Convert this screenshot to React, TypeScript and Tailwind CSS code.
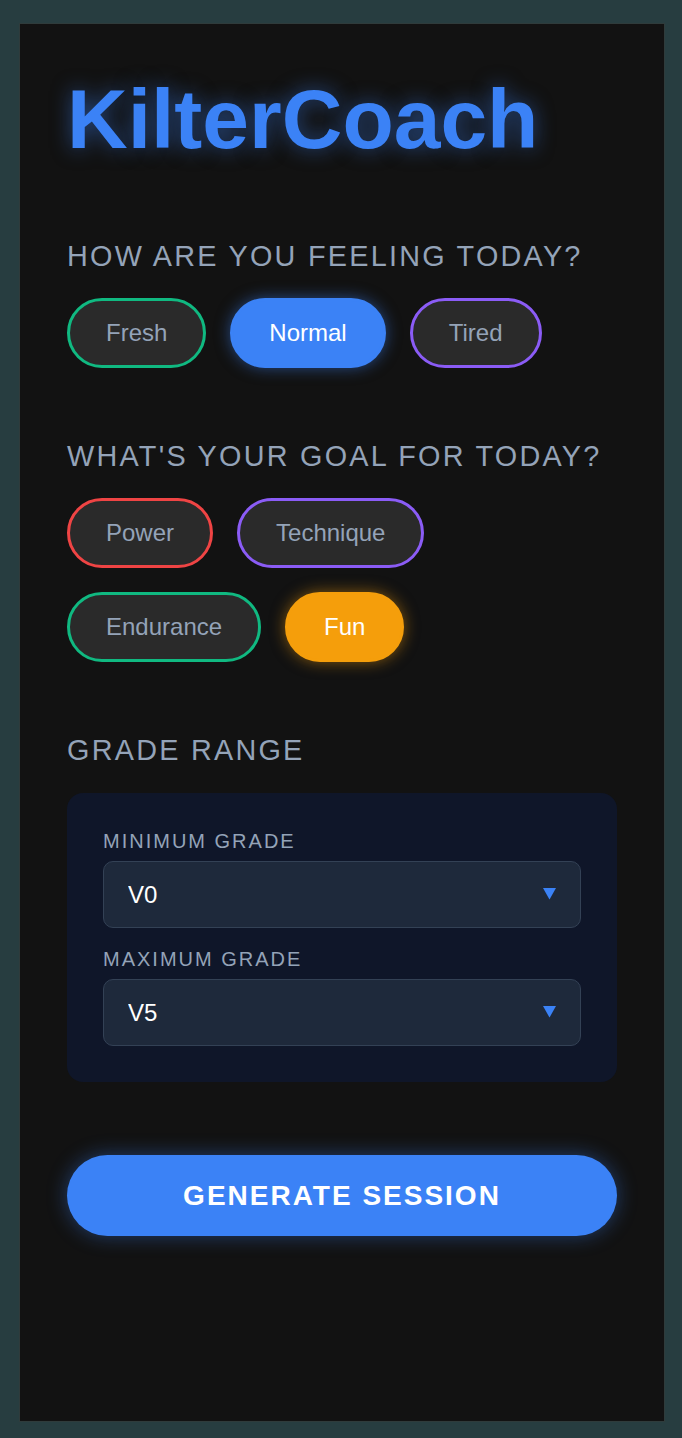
import { useState } from "react";

const MOODS = [
  { label: "Fresh", border: "border-[#10b981]" },
  { label: "Normal", border: "border-[#8b5cf6]" },
  { label: "Tired", border: "border-[#8b5cf6]" },
];

const GOALS = [
  { label: "Power", border: "border-[#ef4444]" },
  { label: "Technique", border: "border-[#8b5cf6]" },
  { label: "Endurance", border: "border-[#10b981]" },
  { label: "Fun", border: "border-[#f59e0b]" },
];

const GRADES = ["V0", "V1", "V2", "V3", "V4", "V5", "V6", "V7", "V8", "V9", "V10"];

const Pill = ({
  label,
  border,
  active,
  activeClass,
  onClick,
}: {
  label: string;
  border: string;
  active: boolean;
  activeClass: string;
  onClick: () => void;
}) => (
  <button
    onClick={onClick}
    className={`h-[70px] rounded-full border-[3px] px-[36px] text-[24px] leading-none ${
      active ? activeClass : `${border} bg-[#2a2a2a] text-[#94a3b8]`
    }`}
  >
    {label}
  </button>
);

const GradeSelect = ({
  label,
  value,
  onChange,
}: {
  label: string;
  value: string;
  onChange: (v: string) => void;
}) => (
  <div>
    <div className="text-[20px] leading-[24px] tracking-[2px] text-[#94a3b8]">{label}</div>
    <div className="relative mt-[8px]">
      <select
        value={value}
        onChange={(e) => onChange(e.target.value)}
        className="block h-[67px] w-full appearance-none rounded-[10px] border border-[#334155] bg-[#1e293b] px-[24px] text-[24px] leading-[normal] text-white outline-none"
      >
        {GRADES.map((g) => (
          <option key={g}>{g}</option>
        ))}
      </select>
      <svg
        className="pointer-events-none absolute right-[25px] top-[27px]"
        width="13"
        height="12"
        viewBox="0 0 13 12"
      >
        <polygon points="0,0 13,0 6.5,11.5" fill="#3b82f6" />
      </svg>
    </div>
  </div>
);

export default function App() {
  const [mood, setMood] = useState("Normal");
  const [goal, setGoal] = useState("Fun");
  const [min, setMin] = useState("V0");
  const [max, setMax] = useState("V5");

  return (
    <div className="min-h-[1438px] bg-[#273d40] pl-[19px] pt-[23px] font-['Liberation_Sans',Arial,sans-serif] leading-[normal]">
      <main className="h-[1399px] w-[646px] border border-[#2f3b3b] bg-[#121212] px-[47px] pt-[47px]">
        <h1 className="text-[84px] leading-[97px] font-bold text-[#3b82f6] [text-shadow:0_0_20px_rgba(59,130,246,0.5)]">
          KilterCoach
        </h1>

        <section className="mt-[72px]">
          <h2 className="mb-[25px] text-[28.8px] leading-[33px] tracking-[2.25px] text-[#94a3b8]">
            HOW ARE YOU FEELING TODAY?
          </h2>
          <div className="flex flex-wrap gap-[24px]">
            {MOODS.map((m) => (
              <Pill
                key={m.label}
                {...m}
                active={mood === m.label}
                activeClass="border-[#3b82f6] bg-[#3b82f6] text-white shadow-[0_0_15px_rgba(59,130,246,0.5)]"
                onClick={() => setMood(m.label)}
              />
            ))}
          </div>
        </section>

        <section className="mt-[72px]">
          <h2 className="mb-[25px] text-[28.8px] leading-[33px] tracking-[2.25px] text-[#94a3b8]">
            WHAT'S YOUR GOAL FOR TODAY?
          </h2>
          <div className="flex flex-wrap gap-[24px]">
            {GOALS.map((g) => (
              <Pill
                key={g.label}
                {...g}
                active={goal === g.label}
                activeClass="border-[#f59e0b] bg-[#f59e0b] text-white shadow-[0_0_15px_rgba(245,158,11,0.5)]"
                onClick={() => setGoal(g.label)}
              />
            ))}
          </div>
        </section>

        <section className="mt-[72px]">
          <h2 className="mb-[26px] text-[28.8px] leading-[33px] tracking-[2.25px] text-[#94a3b8]">
            GRADE RANGE
          </h2>
          <div className="flex flex-col gap-[19px] rounded-[16px] bg-[#0f1629] p-[36px]">
            <GradeSelect label="MINIMUM GRADE" value={min} onChange={setMin} />
            <GradeSelect label="MAXIMUM GRADE" value={max} onChange={setMax} />
          </div>
        </section>

        <button className="mt-[73px] h-[81px] w-full rounded-full bg-[#3b82f6] text-[28px] font-bold tracking-[2px] text-white shadow-[0_0_20px_rgba(59,130,246,0.4)]">
          GENERATE SESSION
        </button>
      </main>
    </div>
  );
}
